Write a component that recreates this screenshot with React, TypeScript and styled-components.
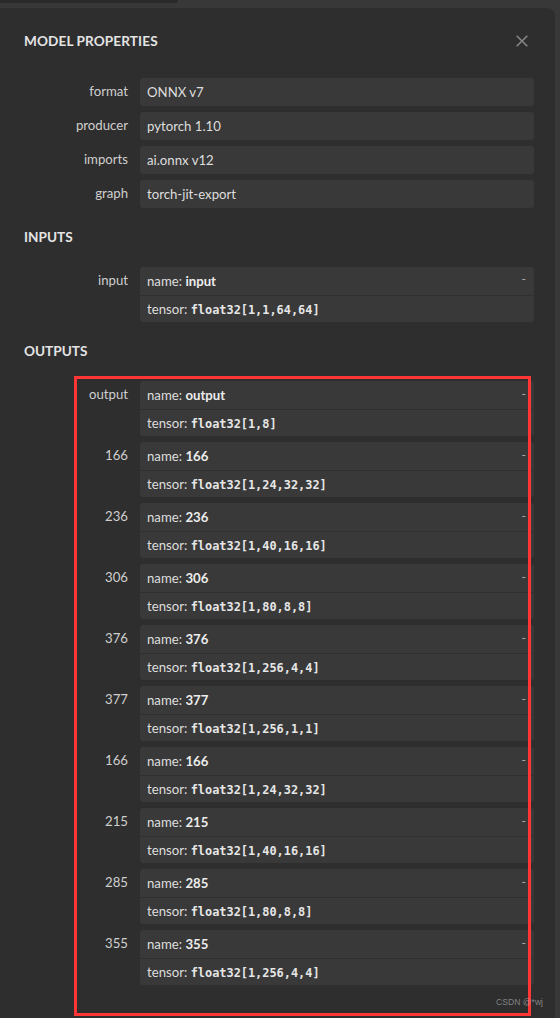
import React from "react";
import styled, { createGlobalStyle } from "styled-components";

const GlobalStyle = createGlobalStyle`
  html, body {
    margin: 0;
    padding: 0;
    background: #383838;
  }
  body {
    font-family: Lato, "Noto Sans", "Liberation Sans", sans-serif;
    -webkit-font-smoothing: antialiased;
  }
`;

const Page = styled.div`
  display: flex;
  flex-direction: column;
  min-height: 100vh;
  width: 560px;
  overflow: hidden;
`;

const TopStrip = styled.div`
  height: 8px;
  flex: none;
`;

const Tab = styled.div`
  width: 178px;
  height: 3px;
  background: #292929;
  border-bottom-right-radius: 6px;
`;

const Panel = styled.div`
  position: relative;
  flex: 1;
  width: 555px;
  box-sizing: border-box;
  padding: 25px 21px 24px 24px;
  background: #2e2e2e;
  border-top-right-radius: 8px;
`;

const TitleRow = styled.div`
  display: flex;
  align-items: center;
  justify-content: space-between;
  height: 16px;
`;

const Title = styled.div`
  font-size: 13.6px;
  font-weight: 700;
  line-height: 16px;
  color: #e4e4e4;
  letter-spacing: 0.1px;
`;

const CloseButton = styled.button`
  display: flex;
  align-items: center;
  justify-content: center;
  width: 14px;
  height: 14px;
  margin-right: 5px;
  padding: 0;
  border: none;
  background: none;
  cursor: pointer;
`;

const SectionHeader = styled.div`
  margin: 21.3px 0 22px;
  font-size: 13.6px;
  font-weight: 700;
  line-height: 16px;
  color: #e4e4e4;
`;

const List = styled.div<{ $top?: number; $gap?: number }>`
  display: flex;
  flex-direction: column;
  gap: ${(p) => p.$gap ?? 6.6}px;
  margin-top: ${(p) => p.$top ?? 0}px;
`;

const Item = styled.div`
  display: grid;
  grid-template-columns: 104px 1fr;
  column-gap: 12px;
`;

const Label = styled.div`
  font-size: 13.2px;
  line-height: 27.5px;
  text-align: right;
  color: #cfcfcf;
`;

const Box = styled.div`
  display: flex;
  flex-direction: column;
  background: #393939;
  border-radius: 3px;
  overflow: hidden;
`;

const Line = styled.div<{ $divided?: boolean }>`
  display: flex;
  align-items: center;
  justify-content: space-between;
  height: 27.5px;
  box-sizing: border-box;
  padding: 0 8px 0 7px;
  font-size: 13.2px;
  color: #dedede;
  white-space: nowrap;
  border-top: ${(p) => (p.$divided ? "1px solid #303030" : "none")};
`;

const Strong = styled.b`
  font-weight: 700;
  color: #ececec;
`;

const Code = styled.code`
  font-family: "DejaVu Sans Mono", "Liberation Mono", monospace;
  font-size: 11.9px;
  font-weight: 700;
  color: #e6e6e6;
`;

const Toggle = styled.span`
  font-size: 12px;
  color: #b4b4b4;
  margin-top: -4px;
`;

const Highlight = styled.div`
  position: absolute;
  left: 74px;
  top: 368px;
  width: 457px;
  height: 640px;
  box-sizing: border-box;
  border: 3px solid #ff3636;
  pointer-events: none;
`;

const Watermark = styled.div`
  position: absolute;
  right: 12px;
  bottom: 10px;
  font-family: "Liberation Sans", Arial, sans-serif;
  font-size: 8.6px;
  line-height: 11px;
  color: rgba(190, 190, 190, 0.6);
`;

const properties: [string, string][] = [
  ["format", "ONNX v7"],
  ["producer", "pytorch 1.10"],
  ["imports", "ai.onnx v12"],
  ["graph", "torch-jit-export"],
];

type Arg = { label: string; name: string; type: string };

const inputs: Arg[] = [{ label: "input", name: "input", type: "float32[1,1,64,64]" }];

const outputs: Arg[] = [
  { label: "output", name: "output", type: "float32[1,8]" },
  { label: "166", name: "166", type: "float32[1,24,32,32]" },
  { label: "236", name: "236", type: "float32[1,40,16,16]" },
  { label: "306", name: "306", type: "float32[1,80,8,8]" },
  { label: "376", name: "376", type: "float32[1,256,4,4]" },
  { label: "377", name: "377", type: "float32[1,256,1,1]" },
  { label: "166", name: "166", type: "float32[1,24,32,32]" },
  { label: "215", name: "215", type: "float32[1,40,16,16]" },
  { label: "285", name: "285", type: "float32[1,80,8,8]" },
  { label: "355", name: "355", type: "float32[1,256,4,4]" },
];

const CloseIcon = () => (
  <svg width="12" height="12" viewBox="0 0 12 12">
    <path d="M0.7 0.7L11.3 11.3M11.3 0.7L0.7 11.3" stroke="#8c8c8c" strokeWidth="1.4" />
  </svg>
);

const Argument = ({ arg }: { arg: Arg }) => (
  <Item>
    <Label>{arg.label}</Label>
    <Box>
      <Line>
        <span>
          name: <Strong>{arg.name}</Strong>
        </span>
        <Toggle>-</Toggle>
      </Line>
      <Line $divided>
        <span>
          tensor: <Code>{arg.type}</Code>
        </span>
      </Line>
    </Box>
  </Item>
);

export default function App() {
  return (
    <>
      <GlobalStyle />
      <Page>
        <TopStrip>
          <Tab />
        </TopStrip>
        <Panel>
          <TitleRow>
            <Title>MODEL PROPERTIES</Title>
            <CloseButton aria-label="Close">
              <CloseIcon />
            </CloseButton>
          </TitleRow>

          <List $top={29}>
            {properties.map(([k, v]) => (
              <Item key={k}>
                <Label>{k}</Label>
                <Box>
                  <Line>{v}</Line>
                </Box>
              </Item>
            ))}
          </List>

          <SectionHeader>INPUTS</SectionHeader>
          <List $gap={6}>
            {inputs.map((a, i) => (
              <Argument key={i} arg={a} />
            ))}
          </List>

          <SectionHeader>OUTPUTS</SectionHeader>
          <List $gap={6}>
            {outputs.map((a, i) => (
              <Argument key={i} arg={a} />
            ))}
          </List>

          <Highlight />
          <Watermark>CSDN @*wj</Watermark>
        </Panel>
      </Page>
    </>
  );
}
